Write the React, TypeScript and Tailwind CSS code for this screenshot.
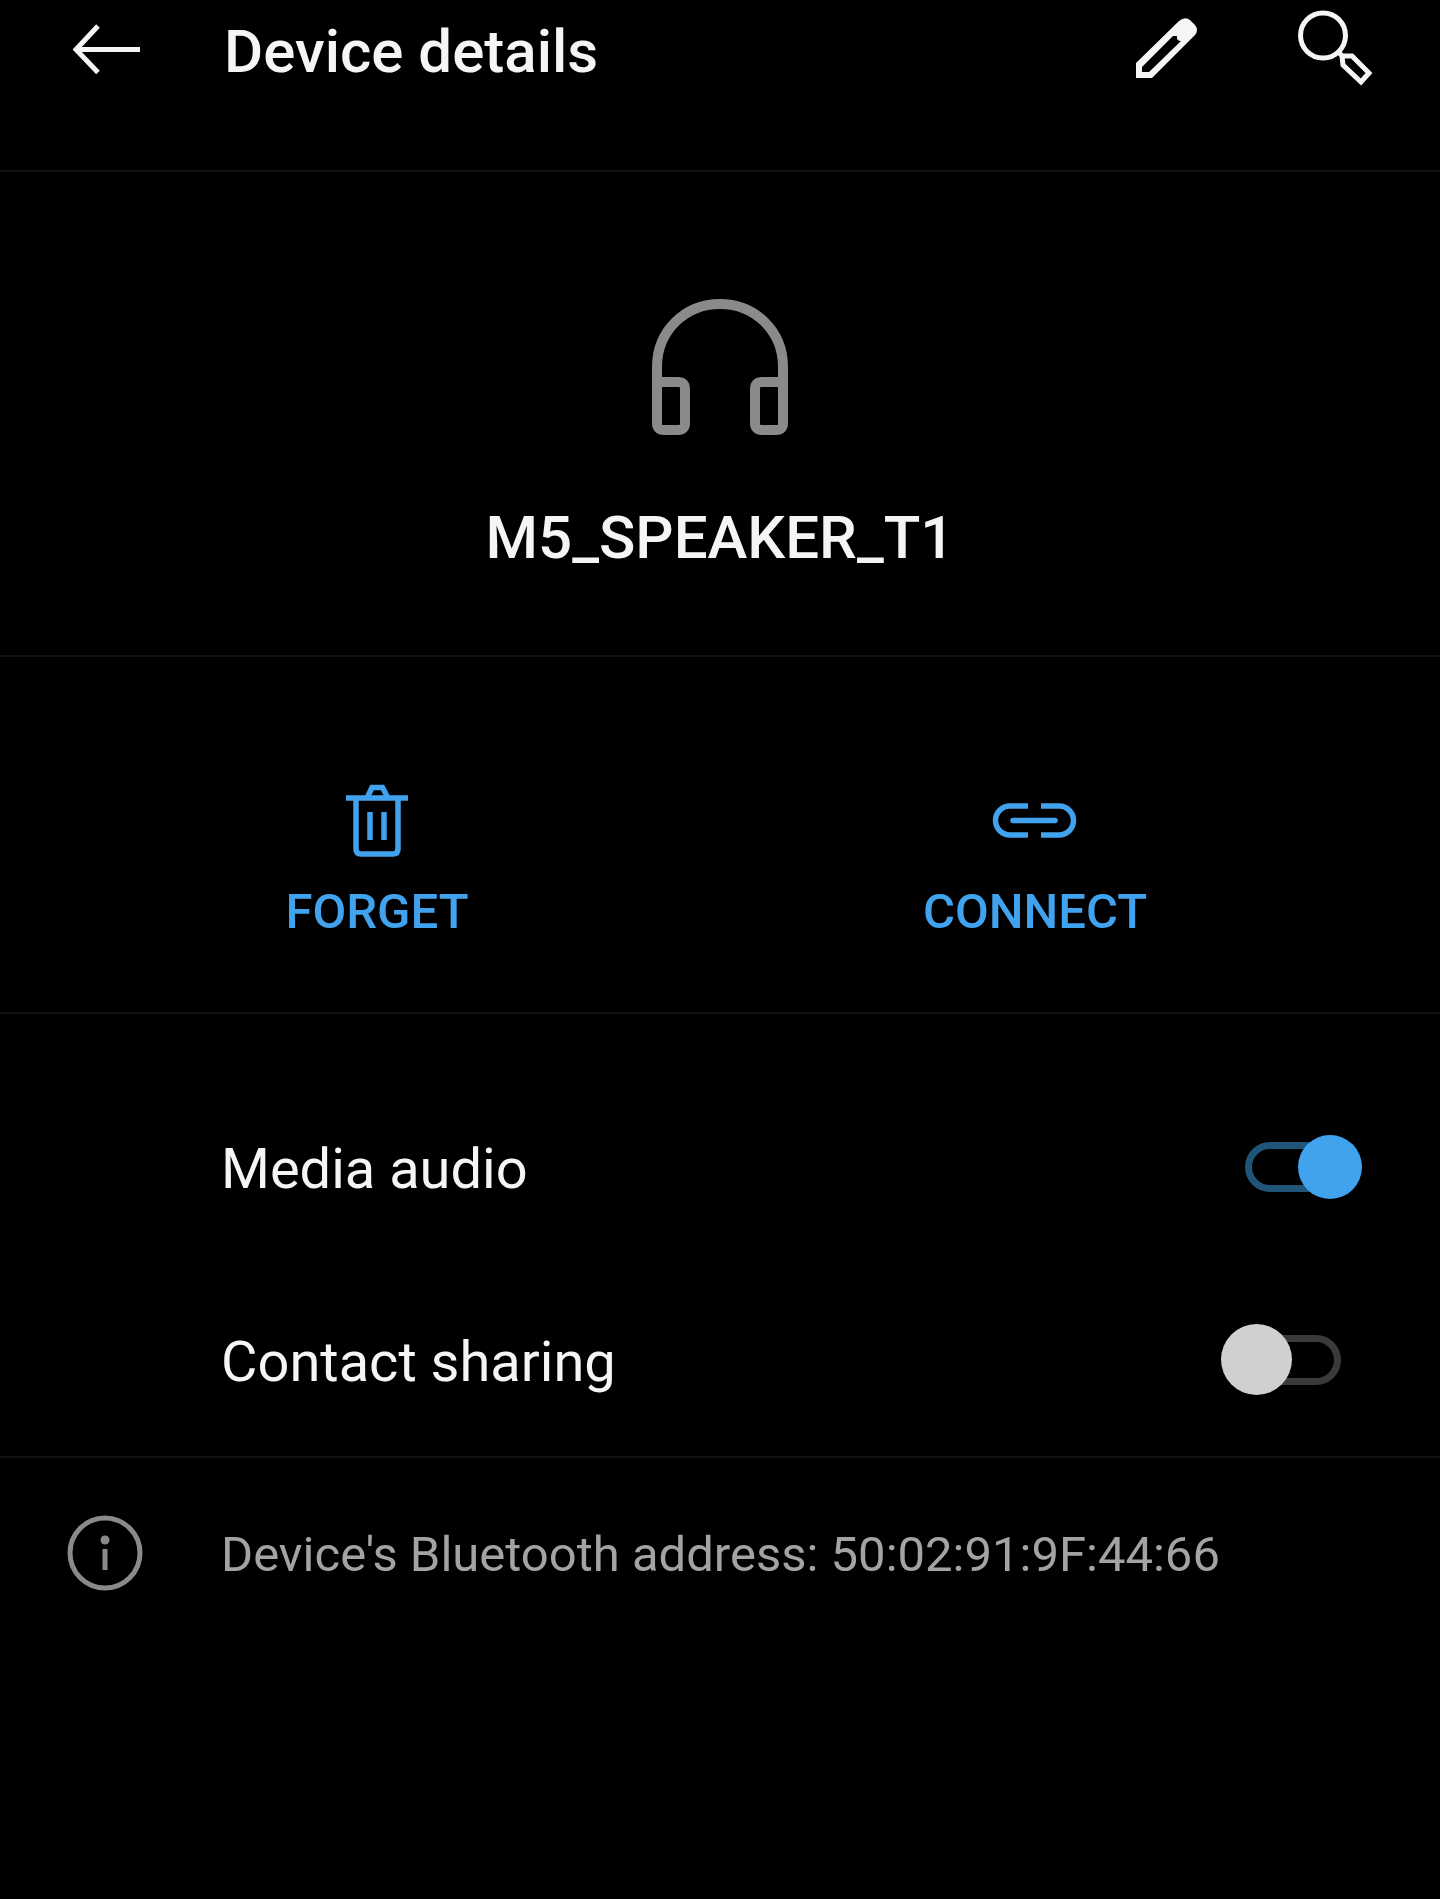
import { useState } from "react";
import type { ReactNode } from "react";

function BackIcon() {
  return (
    <svg viewBox="0 0 80 80" className="size-20" fill="none" stroke="currentColor" strokeWidth="5" aria-hidden="true">
      <path d="M76 37.5H12M34 14L12 37.5L34 60.5" />
    </svg>
  );
}

function PencilIcon() {
  return (
    <svg viewBox="0 0 80 80" className="size-20" fill="currentColor" fillRule="evenodd" aria-hidden="true">
      <path d="M8 51L51 9Q57 4 62 8L67 13Q71 18 67 23L24 66H8ZM14 55V60H21L53 29Q48 29 49 24H45Z" />
    </svg>
  );
}

function SearchIcon() {
  return (
    <svg viewBox="0 0 80 80" className="size-20 overflow-visible" fill="none" stroke="currentColor" strokeWidth="5" aria-hidden="true">
      <circle cx="27" cy="23.5" r="22.5" />
      <path d="M42 39L46 44M46 44H56L73 61L65 70L47 53Z" />
    </svg>
  );
}

function HeadphonesIcon() {
  return (
    <svg viewBox="0 0 138 138" className="size-[138px] text-[#8a8a8a]" fill="none" stroke="currentColor" strokeWidth="10" aria-hidden="true">
      <path d="M6 84V69C6 33 34 6 69 6C104 6 132 33 132 69V84" />
      <path d="M6 84H27Q34 84 34 91V125Q34 132 27 132H13Q6 132 6 125Z" />
      <path d="M132 84H111Q104 84 104 91V125Q104 132 111 132H125Q132 132 132 125Z" />
    </svg>
  );
}

function TrashIcon() {
  return (
    <svg viewBox="0 0 88 88" className="size-[88px]" fill="none" stroke="currentColor" strokeWidth="5.5" aria-hidden="true">
      <path d="M13 21H75M34 21L39 10.5H49.5L55 21" />
      <path d="M23 21V72Q23 77 28 77H60Q65 77 65 72V21" />
      <path d="M37 35V63M51 35V63" />
    </svg>
  );
}

function LinkIcon() {
  return (
    <svg viewBox="0 0 88 88" className="size-[88px]" fill="none" stroke="currentColor" strokeWidth="5.5" aria-hidden="true">
      <path d="M37 29H19A14 14 0 0 0 19 58H37M50 29H68A14 14 0 0 1 68 58H50" />
      <path d="M22 43.5H64" strokeLinecap="round" />
    </svg>
  );
}

function InfoIcon() {
  return (
    <svg viewBox="0 0 76 76" className="size-[76px]" fill="none" stroke="currentColor" strokeWidth="5" aria-hidden="true">
      <circle cx="38" cy="38" r="35" />
      <path d="M38 34V55" />
      <circle cx="38" cy="25" r="4.5" fill="currentColor" stroke="none" />
    </svg>
  );
}

function IconButton({ label, children }: { label: string; children: ReactNode }) {
  return (
    <button type="button" aria-label={label} className="shrink-0">
      {children}
    </button>
  );
}

function Action({ label, children }: { label: string; children: ReactNode }) {
  return (
    <button type="button" className="flex flex-col items-center gap-[15px] text-[49px] leading-[64px] font-medium text-[#41a2ee]">
      {children}
      {label}
    </button>
  );
}

function SwitchRow({ id, label, initial }: { id: string; label: string; initial: boolean }) {
  const [on, setOn] = useState(initial);
  return (
    <div className="flex h-[193px] items-center justify-between pr-[78px] pl-[221px]">
      <label htmlFor={id} className="pt-1 text-[56px] leading-[72px]">
        {label}
      </label>
      <input
        id={id}
        type="checkbox"
        role="switch"
        checked={on}
        onChange={(e) => setOn(e.target.checked)}
        className="relative h-[72px] w-[141px] shrink-0 appearance-none before:absolute before:top-[11px] before:left-6 before:h-[50px] before:w-24 before:rounded-full before:border-[7px] before:border-[#3a3a3a] before:content-[''] after:absolute after:top-0 after:left-0 after:size-[71px] after:rounded-full after:bg-[#d0d0d0] after:content-[''] checked:before:border-[#205478] checked:after:top-1 checked:after:left-[77px] checked:after:size-16 checked:after:bg-[#41a2ee]"
      />
    </div>
  );
}

export default function App() {
  return (
    <div className="min-h-screen bg-black font-[Roboto,sans-serif] text-[#f5f5f5]">
      <header className="flex items-center border-b-2 border-[#111111] pt-3 pr-16 pb-[78px] pl-16">
        <IconButton label="Back">
          <BackIcon />
        </IconButton>
        <h1 className="ml-20 flex-1 text-6xl leading-[80px] font-medium">Device details</h1>
        <div className="flex gap-22">
          <IconButton label="Edit">
            <PencilIcon />
          </IconButton>
          <IconButton label="Search">
            <SearchIcon />
          </IconButton>
        </div>
      </header>
      <main>
        <section className="flex flex-col items-center gap-[62px] border-b-2 border-[#111111] pt-[126px] pb-[77px]">
          <HeadphonesIcon />
          <h2 className="text-6xl leading-[80px] font-medium">M5_SPEAKER_T1</h2>
        </section>
        <section className="grid grid-cols-2 border-b-2 border-[#111111] pt-[120px] pr-[76px] pb-[68px] pl-12">
          <Action label="FORGET">
            <TrashIcon />
          </Action>
          <Action label="CONNECT">
            <LinkIcon />
          </Action>
        </section>
        <section className="border-b-2 border-[#111111] pt-14">
          <SwitchRow id="media-audio" label="Media audio" initial={true} />
          <SwitchRow id="contact-sharing" label="Contact sharing" initial={false} />
        </section>
        <section className="flex items-center gap-[78px] pt-[57px] pr-12 pl-[67px]">
          <span className="shrink-0 text-[#8a8a8a]">
            <InfoIcon />
          </span>
          <p className="pt-1 text-[49px] leading-[64px] text-[#a3a3a3]">Device's Bluetooth address: 50:02:91:9F:44:66</p>
        </section>
      </main>
    </div>
  );
}
